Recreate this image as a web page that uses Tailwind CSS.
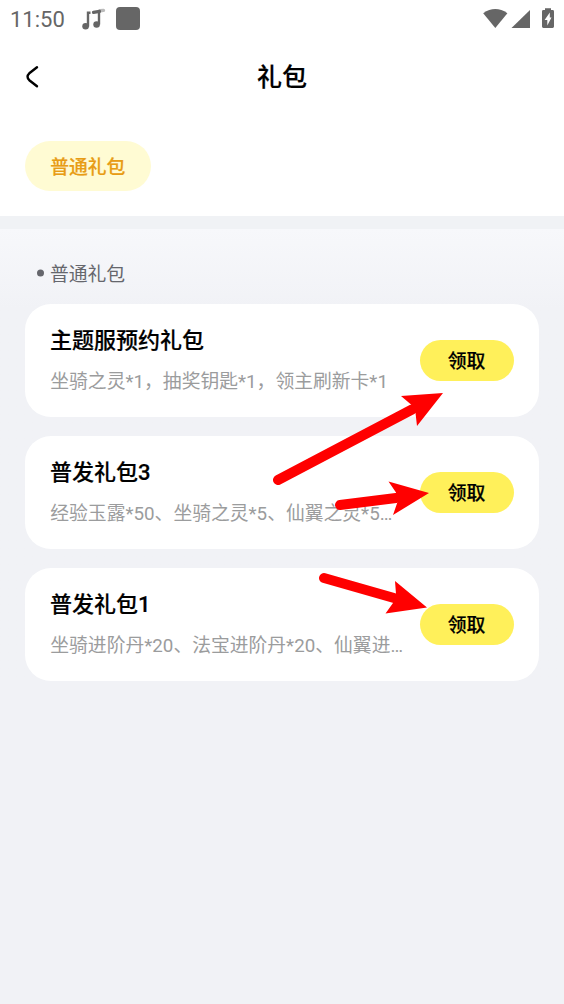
<!DOCTYPE html>
<html lang="zh-CN">
<head>
<meta charset="utf-8">
<title>礼包</title>
<script src="https://cdn.jsdelivr.net/npm/@tailwindcss/browser@4"></script>
</head>
<body class="relative h-[1004px] w-[564px] overflow-hidden bg-[#f1f2f6] font-['Roboto','Noto_Sans_CJK_SC',sans-serif] text-black">
<div class="flex h-[216px] flex-col bg-white">
  <div class="flex h-[39px] items-center pl-[10px] text-[#666666]">
    <span class="w-[72px] text-[22px] leading-[39px]">11:50</span>
    <svg class="h-[24px] w-[24px] -translate-y-[0.500px]" viewBox="82 7 24 24" fill="none" stroke="#666">
      <path d="M100 10.300 103.500 9.900" stroke="#bbb" stroke-width="3.4" stroke-linecap="round"/>
      <path d="M88 26V12.200H90.500M99 24V11" stroke-width="2.4"/><path d="M93.5 11.900 99.500 10.900" stroke-width="3.2" stroke-linecap="round"/>
      <circle cx="85.6" cy="25.8" r="3.3" fill="#666" stroke="none"/><circle cx="96.6" cy="24" r="3.3" fill="#666" stroke="none"/>
    </svg>
    <div class="ml-[10px] h-[23px] w-[24px] -translate-y-[1px] rounded-[4px] bg-[#666666]"></div>
    <svg class="ml-auto h-[39px] w-[94px]" viewBox="470 0 94 39" fill="#666">
      <path d="M483.200 13.200Q495.300 4.800 507.400 13.200L495.300 28Z"/>
      <path d="M530 10V28H511.500Z"/>
      <path d="M545 8.200H551V10H552.600Q554 10 554 11.400V26.600Q554 28 552.600 28H543.400Q542 28 542 26.600V11.400Q542 10 543.400 10H545Z"/>
      <path d="M549.800 12.500 544.600 20H547.300V25.500L551.500 17.500H549.800Z" fill="#fff"/>
    </svg>
  </div>
  <header class="grid h-[76px] grid-cols-[1fr_auto_1fr] items-center">
    <svg class="ml-[24px] h-[26px] w-[18px]" viewBox="24 64 18 26" fill="none" stroke="#000" stroke-width="2.4" stroke-linecap="round" stroke-linejoin="round"><path d="M37 67.300 29.300 73.300Q25.800 76.700 29.300 80.200L37 86.300"/></svg>
    <h1 class="pt-[2px] text-[25px] leading-[36px] font-medium [-webkit-text-stroke:0.2px_black]">礼包</h1>
  </header>
  <div class="px-[25px] pt-[26px]">
    <div class="flex h-[50px] w-[125.500px] items-center justify-center rounded-full bg-[#fffbd3] pt-[4px] text-[18.8px] font-medium text-[#e89c15] [-webkit-text-stroke:0.2px_#e89c15]">普通礼包</div>
  </div>
</div>
<div class="h-[13px] bg-[#f0f2f5]"></div>
<main class="bg-linear-to-b from-[#f7f8fb] to-[#f1f2f6] to-[80px] px-[25px]">
  <div class="flex h-[75px] items-center pt-[14px] pl-[12px] text-[18.8px] text-[#65666c]"><span class="mr-[6.500px] size-[6.500px] -translate-y-[0.500px] rounded-full bg-[#65666c]"></span><span class="pt-[3px]">普通礼包</span></div>
  <div class="flex flex-col gap-[19px]">
    <section class="flex h-[113px] items-center justify-between rounded-[26px] bg-white px-[25.500px]">
      <div class="-ml-[0.500px] w-[358px]">
        <h2 class="text-[22px] leading-[30px] font-medium [-webkit-text-stroke:0.2px_black]">主题服预约礼包</h2>
        <p class="mt-[12px] -mb-[1px] ml-[0.300px] text-[18.8px] leading-[28px] whitespace-nowrap text-[#9b9c9d]">坐骑之灵*1，抽奖钥匙*1，领主刷新卡*1</p>
      </div>
      <button class="h-[41px] w-[94px] rounded-full bg-[#fff05a] pt-[3px] text-[18.8px] font-medium [-webkit-text-stroke:0.2px_black]">领取</button>
    </section>
    <section class="flex h-[113px] items-center justify-between rounded-[26px] bg-white px-[25.500px]">
      <div class="-ml-[0.500px] w-[358px]">
        <h2 class="text-[22px] leading-[30px] font-medium [-webkit-text-stroke:0.2px_black]">普发礼包3</h2>
        <p class="mt-[12px] -mb-[1px] ml-[0.300px] text-[18.8px] leading-[28px] whitespace-nowrap text-[#9b9c9d]">经验玉露*50、坐骑之灵*5、仙翼之灵*5…</p>
      </div>
      <button class="h-[41px] w-[94px] rounded-full bg-[#fff05a] pt-[3px] text-[18.8px] font-medium [-webkit-text-stroke:0.2px_black]">领取</button>
    </section>
    <section class="flex h-[113px] items-center justify-between rounded-[26px] bg-white px-[25.500px]">
      <div class="-ml-[0.500px] w-[358px]">
        <h2 class="text-[22px] leading-[30px] font-medium [-webkit-text-stroke:0.2px_black]">普发礼包1</h2>
        <p class="mt-[12px] -mb-[1px] ml-[0.300px] text-[18.8px] leading-[28px] whitespace-nowrap text-[#9b9c9d]">坐骑进阶丹*20、法宝进阶丹*20、仙翼进…</p>
      </div>
      <button class="h-[41px] w-[94px] rounded-full bg-[#fff05a] pt-[3px] text-[18.8px] font-medium [-webkit-text-stroke:0.2px_black]">领取</button>
    </section>
  </div>
</main>
<svg class="pointer-events-none absolute top-0 left-0 h-[1004px] w-[564px]" viewBox="0 0 564 1004" fill="#f00" stroke="#f00" stroke-width="10" stroke-linecap="round">
  <path d="M278 480 412 409.500M340 505 396 498M324 578 394 598"/>
  <path stroke="none" d="M443 393 401 396 411 404.500 415.500 413 417 426ZM429 493 388.500 481.500 396 492.500 397.500 502 393 515ZM427 607.500 395 581 396 594 393 603 385.500 613.500Z"/>
</svg>
</body>
</html>
